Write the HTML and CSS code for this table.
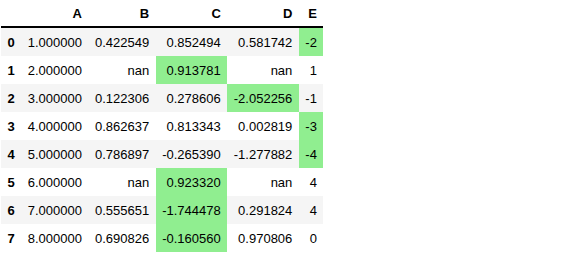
FILE: index.html
```html
<!DOCTYPE html>
<html>
<head>
<meta charset="utf-8">
<link rel="stylesheet" href="styles.css">
</head>
<body>
<table class="df">
  <thead>
    <tr><th></th><th>A</th><th>B</th><th>C</th><th>D</th><th>E</th></tr>
  </thead>
  <tbody>
    <tr><th>0</th><td>1.000000</td><td>0.422549</td><td>0.852494</td><td>0.581742</td><td class="hl">-2</td></tr>
    <tr><th>1</th><td>2.000000</td><td>nan</td><td class="hl">0.913781</td><td>nan</td><td>1</td></tr>
    <tr><th>2</th><td>3.000000</td><td>0.122306</td><td>0.278606</td><td class="hl">-2.052256</td><td>-1</td></tr>
    <tr><th>3</th><td>4.000000</td><td>0.862637</td><td>0.813343</td><td>0.002819</td><td class="hl">-3</td></tr>
    <tr><th>4</th><td>5.000000</td><td>0.786897</td><td>-0.265390</td><td>-1.277882</td><td class="hl">-4</td></tr>
    <tr><th>5</th><td>6.000000</td><td>nan</td><td class="hl">0.923320</td><td>nan</td><td>4</td></tr>
    <tr><th>6</th><td>7.000000</td><td>0.555651</td><td class="hl">-1.744478</td><td>0.291824</td><td>4</td></tr>
    <tr><th>7</th><td>8.000000</td><td>0.690826</td><td class="hl">-0.160560</td><td>0.970806</td><td>0</td></tr>
  </tbody>
</table>
</body>
</html>
```
FILE: styles.css
```css
html, body {
  margin: 0;
  padding: 0;
  background: #fff;
}
body {
  font-family: "Liberation Sans", Arial, sans-serif;
  font-size: 13px;
  color: #000;
}
.df {
  border-collapse: collapse;
  border-spacing: 0;
  margin-left: 1px;
}
.df th, .df td {
  padding: 6.5px 6.5px;
  line-height: 15px;
  text-align: right;
  vertical-align: middle;
  white-space: nowrap;
}
.df th {
  font-weight: bold;
}
.df thead th {
  padding-top: 6px;
  padding-bottom: 5px;
}
.df thead {
  border-bottom: 2px solid #000;
}
.df tbody tr:nth-child(odd) {
  background: #f5f5f5;
}
.df td.hl {
  background: #90ee90;
}
```
